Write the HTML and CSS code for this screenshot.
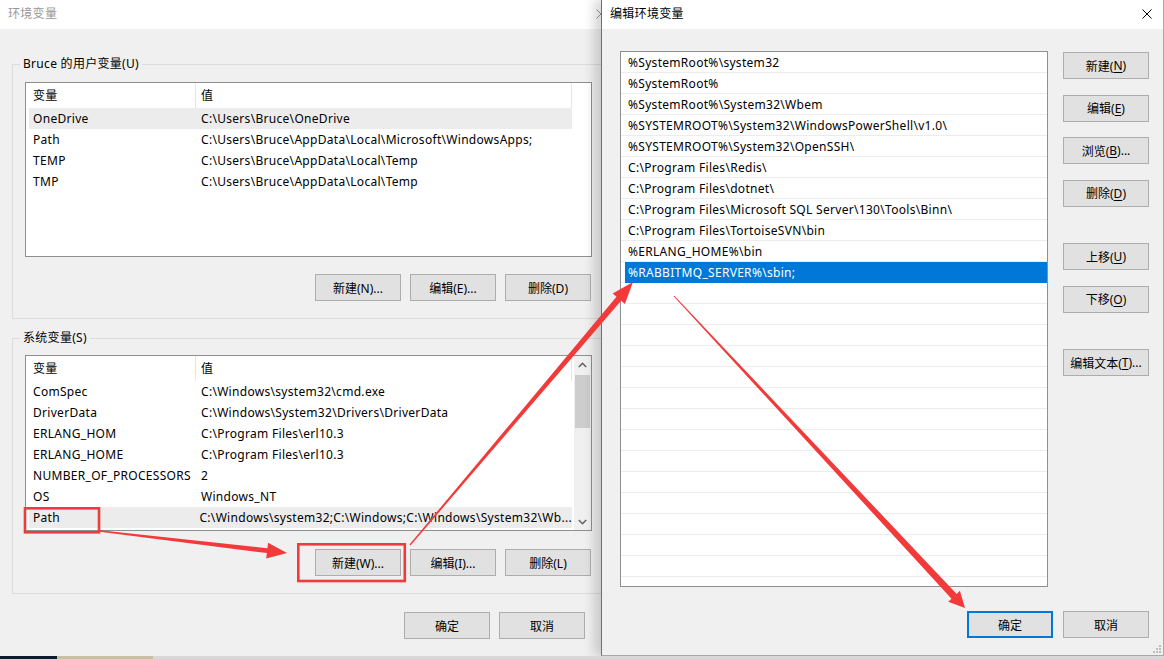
FILE: index.html
```html
<!DOCTYPE html>
<html lang="zh-CN">
<head>
    <meta charset="UTF-8">
    <title>编辑环境变量</title>
    <link rel="stylesheet" href="styles.css">
</head>
<body>
<div class="desktop">
    <!-- 环境变量 (背后的窗口) -->
    <div class="window env">
        <div class="titlebar">
            <span class="title dim">环境变量</span>
            <span class="close half">
                <svg width="10" height="10" viewBox="0 0 10 10"><path d="M0.5 0.5L9.5 9.5M9.5 0.5L0.5 9.5" stroke="#9a9a9a" stroke-width="1"/></svg>
            </span>
        </div>
        <div class="env-body">
            <fieldset class="group user-group">
                <legend>Bruce 的用户变量(U)</legend>
                <div class="lv">
                    <div class="lv-main">
                        <div class="lv-head"><span class="c1">变量</span><span class="c2">值</span></div>
                        <div class="lv-row hot"><span class="c1">OneDrive</span><span class="c2">C:\Users\Bruce\OneDrive</span></div>
                        <div class="lv-row"><span class="c1">Path</span><span class="c2">C:\Users\Bruce\AppData\Local\Microsoft\WindowsApps;</span></div>
                        <div class="lv-row"><span class="c1">TEMP</span><span class="c2">C:\Users\Bruce\AppData\Local\Temp</span></div>
                        <div class="lv-row"><span class="c1">TMP</span><span class="c2">C:\Users\Bruce\AppData\Local\Temp</span></div>
                    </div>
                </div>
                <div class="btn-row">
                    <div class="btn">新建(N)...</div>
                    <div class="btn">编辑(E)...</div>
                    <div class="btn">删除(D)</div>
                </div>
            </fieldset>

            <fieldset class="group sys-group">
                <legend>系统变量(S)</legend>
                <div class="lv">
                    <div class="lv-main">
                        <div class="lv-head"><span class="c1">变量</span><span class="c2">值</span></div>
                        <div class="lv-row"><span class="c1">ComSpec</span><span class="c2">C:\Windows\system32\cmd.exe</span></div>
                        <div class="lv-row"><span class="c1">DriverData</span><span class="c2">C:\Windows\System32\Drivers\DriverData</span></div>
                        <div class="lv-row"><span class="c1">ERLANG_HOM</span><span class="c2">C:\Program Files\erl10.3</span></div>
                        <div class="lv-row"><span class="c1">ERLANG_HOME</span><span class="c2">C:\Program Files\erl10.3</span></div>
                        <div class="lv-row"><span class="c1">NUMBER_OF_PROCESSORS</span><span class="c2">2</span></div>
                        <div class="lv-row"><span class="c1">OS</span><span class="c2">Windows_NT</span></div>
                        <div class="lv-row hot"><span class="c1">Path</span><span class="c2">C:\Windows\system32;C:\Windows;C:\Windows\System32\Wb...</span></div>
                    </div>
                    <div class="vscroll">
                        <div class="arrow"><svg width="9" height="6" viewBox="0 0 9 6"><path d="M0.8 5L4.5 1.3L8.2 5" fill="none" stroke="#606060" stroke-width="1.5"/></svg></div>
                        <div class="track"><div class="thumb"></div></div>
                        <div class="arrow"><svg width="9" height="6" viewBox="0 0 9 6"><path d="M0.8 1L4.5 4.7L8.2 1" fill="none" stroke="#606060" stroke-width="1.5"/></svg></div>
                    </div>
                </div>
                <div class="btn-row">
                    <div class="btn">新建(W)...</div>
                    <div class="btn">编辑(I)...</div>
                    <div class="btn">删除(L)</div>
                </div>
            </fieldset>

            <div class="dialog-btns">
                <div class="btn">确定</div>
                <div class="btn">取消</div>
            </div>
        </div>
    </div>

    <!-- 编辑环境变量 -->
    <div class="window edit">
        <div class="titlebar">
            <span class="title">编辑环境变量</span>
            <span class="close">
                <svg width="10" height="10" viewBox="0 0 10 10"><path d="M0.5 0.5L9.5 9.5M9.5 0.5L0.5 9.5" stroke="#000" stroke-width="1"/></svg>
            </span>
        </div>
        <div class="edit-body">
            <div class="edit-main">
                <div class="path-list">
                    <div class="pl-row"><span>%SystemRoot%\system32</span></div>
                    <div class="pl-row"><span>%SystemRoot%</span></div>
                    <div class="pl-row"><span>%SystemRoot%\System32\Wbem</span></div>
                    <div class="pl-row"><span>%SYSTEMROOT%\System32\WindowsPowerShell\v1.0\</span></div>
                    <div class="pl-row"><span>%SYSTEMROOT%\System32\OpenSSH\</span></div>
                    <div class="pl-row"><span>C:\Program Files\Redis\</span></div>
                    <div class="pl-row"><span>C:\Program Files\dotnet\</span></div>
                    <div class="pl-row"><span>C:\Program Files\Microsoft SQL Server\130\Tools\Binn\</span></div>
                    <div class="pl-row"><span>C:\Program Files\TortoiseSVN\bin</span></div>
                    <div class="pl-row"><span>%ERLANG_HOME%\bin</span></div>
                    <div class="pl-row selected"><span>%RABBITMQ_SERVER%\sbin;</span></div>
                    <div class="pl-row"></div>
                    <div class="pl-row"></div>
                    <div class="pl-row"></div>
                    <div class="pl-row"></div>
                    <div class="pl-row"></div>
                    <div class="pl-row"></div>
                    <div class="pl-row"></div>
                    <div class="pl-row"></div>
                    <div class="pl-row"></div>
                    <div class="pl-row"></div>
                    <div class="pl-row"></div>
                    <div class="pl-row"></div>
                    <div class="pl-row"></div>
                    <div class="pl-row"></div>
                </div>
                <div class="side-btns">
                    <div class="btn">新建(<u>N</u>)</div>
                    <div class="btn">编辑(<u>E</u>)</div>
                    <div class="btn">浏览(<u>B</u>)...</div>
                    <div class="btn">删除(<u>D</u>)</div>
                    <div class="btn spaced">上移(<u>U</u>)</div>
                    <div class="btn">下移(<u>O</u>)</div>
                    <div class="btn spaced">编辑文本(<u>T</u>)...</div>
                </div>
            </div>
            <div class="dialog-btns">
                <div class="btn default">确定</div>
                <div class="btn">取消</div>
            </div>
            <svg class="grip" width="9" height="9" viewBox="0 0 9 9">
                <rect x="7" y="1" width="2" height="2" fill="#bdbdbd"/>
                <rect x="4" y="4" width="2" height="2" fill="#bdbdbd"/>
                <rect x="7" y="4" width="2" height="2" fill="#bdbdbd"/>
                <rect x="1" y="7" width="2" height="2" fill="#bdbdbd"/>
                <rect x="4" y="7" width="2" height="2" fill="#bdbdbd"/>
                <rect x="7" y="7" width="2" height="2" fill="#bdbdbd"/>
            </svg>
        </div>
    </div>
</div>

<div class="taskbar">
    <span class="seg navy"></span>
    <span class="seg sand"></span>
    <span class="seg grey"></span>
</div>

<!-- 红色标注 -->
<svg class="marks" width="1164" height="659" viewBox="0 0 1164 659">
    <rect x="25" y="508.3" width="74" height="24" fill="none" stroke="#f33a3a" stroke-width="2.6"/>
    <rect x="298.3" y="544.3" width="106.5" height="36.7" fill="none" stroke="#f33a3a" stroke-width="2.6"/>
    <polygon fill="#f33a3a" points="99.9,531.7 266.9,553.1 266.2,558.6 287,553 268.1,542.7 267.4,548.2 100.1,530.3"/>
    <polygon fill="#f33a3a" points="410.5,545.4 621.1,300.7 624.9,304 633,282 612.7,293.6 616.5,296.8 409.5,544.6"/>
    <polygon fill="#f33a3a" points="673.6,296.3 951.5,598.7 948.2,601.8 965,608 959.9,590.8 956.7,593.9 674.4,295.7"/>
</svg>
</body>
</html>
```

FILE: styles.css
```css
* {
    box-sizing: border-box;
}
body {
    margin: 0;
    width: 1164px;
    height: 659px;
    overflow: hidden;
    position: relative;
    font-family: "Noto Sans", "Noto Sans CJK SC", sans-serif;
    font-size: 12px;
    letter-spacing: 0.3px;
    color: #000;
    background: #d8d8d8;
}
.desktop {
    display: flex;
    height: 656px;
}
.window {
    display: flex;
    flex-direction: column;
    background: #f0f0f0;
    height: 656px;
}
.titlebar {
    height: 29px;
    flex: none;
    background: #fff;
    display: flex;
    align-items: center;
    justify-content: space-between;
    padding-bottom: 2px;
    line-height: 16px;
}
.title.dim {
    color: #999;
}
.close {
    display: flex;
    width: 10px;
}

/* 左侧：环境变量 */
.env {
    width: 601px;
    overflow: hidden;
}
.env .titlebar {
    padding-left: 8px;
}
.close.half {
    margin-right: -5px;
}
.env-body {
    display: flex;
    flex-direction: column;
}
.group {
    margin: 0 0 0 12px;
    width: 593px;
    padding: 0 12px 17px;
    border: 1px solid #dcdcdc;
    min-width: 0;
}
.group legend {
    margin-left: -5px;
    padding: 0 3px 0 3px;
    line-height: 16px;
}
.user-group {
    margin-top: 27px;
    padding-top: 10px;
}
.sys-group {
    margin-top: 11px;
    padding-top: 9px;
}
.lv {
    width: 567px;
    height: 175px;
    border: 1px solid #8e8f94;
    background: #fff;
    display: flex;
}
.sys-group .lv {
    height: 176px;
}
.lv-main {
    flex: 1;
}
.lv-head {
    display: flex;
    height: 25px;
    line-height: 25px;
    width: 546px;
}
.lv-head .c1 {
    width: 170px;
    padding-left: 7px;
    border-right: 1px solid #e5e5e5;
}
.lv-head .c2 {
    flex: 1;
    padding-left: 5px;
    border-right: 1px solid #e5e5e5;
}
.lv-row {
    display: flex;
    height: 21px;
    line-height: 21px;
    margin-left: 3px;
    width: 543px;
    white-space: nowrap;
}
.lv-row.hot {
    background: #ececec;
}
.lv-row .c1 {
    width: 166px;
    padding-left: 4px;
    overflow: hidden;
}
.lv-row .c2 {
    padding-left: 6px;
}
.vscroll {
    width: 17px;
    display: flex;
    flex-direction: column;
    background: #f0f0f0;
}
.vscroll .arrow {
    height: 17px;
    display: flex;
    align-items: center;
    justify-content: center;
}
.vscroll .track {
    flex: 1;
    padding: 2px 1px;
}
.thumb {
    height: 53px;
    background: #cdcdcd;
}
.btn-row {
    display: flex;
    justify-content: flex-end;
    gap: 9px;
    width: 566px;
    margin-top: 17px;
}
.sys-group .btn-row {
    margin-top: 18px;
}
.btn {
    width: 86px;
    height: 27px;
    background: #e1e1e1;
    border: 1px solid #adadad;
    display: flex;
    align-items: center;
    justify-content: center;
    white-space: nowrap;
    letter-spacing: 0;
}
.btn u {
    text-underline-offset: 2px;
}
.dialog-btns {
    display: flex;
    justify-content: flex-end;
    gap: 9px;
    margin-top: 18px;
    padding-right: 16px;
}

/* 右侧：编辑环境变量 */
.edit {
    width: 563px;
    border-left: 1px solid #6f6f6f;
    border-right: 1px solid #a8a8a8;
    border-bottom: 1px solid #a8a8a8;
    box-shadow: -7px 0 10px rgba(0, 0, 0, 0.16);
}
.edit .titlebar {
    padding-left: 8px;
    padding-right: 11px;
}
.edit-body {
    flex: 1;
    padding: 22px 14px 0 18px;
    position: relative;
}
.edit-main {
    display: flex;
    gap: 15px;
}
.path-list {
    width: 428px;
    height: 536px;
    border: 1px solid #8e8f94;
    background: #fff;
    overflow: hidden;
}
.pl-row {
    height: 21px;
    border-bottom: 1px solid #ececec;
    padding-left: 4px;
    white-space: nowrap;
}
.pl-row span {
    display: block;
    line-height: 21px;
    padding-left: 3px;
}
.pl-row.selected span {
    line-height: 20px;
    padding-top: 1px;
    background: #0078d7;
    color: #fff;
}
.side-btns {
    display: flex;
    flex-direction: column;
    gap: 15.5px;
    padding-top: 1px;
}
.side-btns .spaced {
    margin-top: 21px;
}
.edit .dialog-btns {
    margin-top: 24px;
    padding-right: 0;
    gap: 10px;
}
.btn.default {
    border: 2px solid #0078d7;
}
.grip {
    position: absolute;
    right: 2px;
    bottom: 2px;
}

.taskbar {
    display: flex;
    height: 3px;
}
.seg.navy {
    width: 57px;
    background: #0c1b2c;
}
.seg.sand {
    width: 96px;
    background: #c9bfa4;
}
.seg.grey {
    flex: 1;
    background: #d8d8d8;
}
.marks {
    position: absolute;
    left: 0;
    top: 0;
    pointer-events: none;
}
```
